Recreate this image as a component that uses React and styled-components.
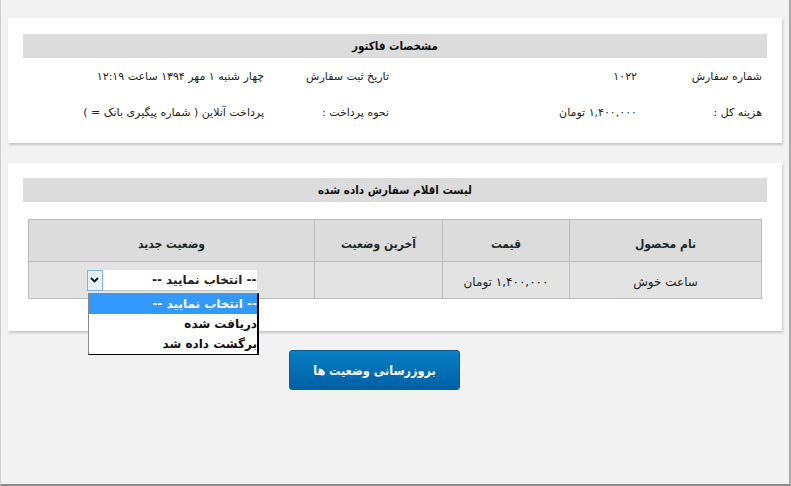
import React from 'react';
import styled, { createGlobalStyle, css } from 'styled-components';

// Invoice details page (order info + ordered items with status select)

const GlobalStyle = createGlobalStyle`
  html, body {
    margin: 0;
    padding: 0;
    background: #f2f2f2;
  }
  body {
    font-family: "DejaVu Sans", "Noto Sans", sans-serif;
    font-size: 12px;
    color: #222;
  }
`

const Frame = styled.div`
  box-sizing: border-box;
  width: 791px;
  height: 486px;
  direction: rtl;
  border-left: 1px solid #cfcfcf;
  border-right: 2px solid #a8a8a8;
  border-bottom: 2px solid #8a8a8a;
  padding: 18px 7px 0 7px;
`

const Card = styled.div`
  background: #fff;
  box-shadow: 1px 2px 2px rgba(0, 0, 0, 0.18);
  padding: 16px 15px 13px 15px;
  margin-bottom: 20px;

  ${props => props.items && css`
    padding: 15px 15px 32px 15px;
    margin-bottom: 19px;
  `}
`

const TitleBar = styled.div`
  height: 24px;
  line-height: 25px;
  background: #dcdcdc;
  text-align: center;
  font-family: "DejaVu Sans Condensed", "DejaVu Sans", sans-serif;
  font-weight: bold;
  font-size: 11.5px;
  color: #111;
`

const InfoTable = styled.div`
  display: grid;
  grid-template-columns: 125px 248px 125px 1fr;
  grid-auto-rows: 36px;
  font-size: 11px;
`

const InfoCell = styled.div`
  display: flex;
  align-items: center;
  padding-right: 5px;
  white-space: nowrap;
`

const ItemsTable = styled.div`
  display: grid;
  grid-template-columns: 192px 127px 128px 1fr;
  grid-template-rows: 42px 37px;
  margin: 17px 5px 0 5px;
  border-top: 1px solid #bcbcbc;
  border-right: 1px solid #bcbcbc;
`

const Cell = styled.div`
  position: relative;
  display: flex;
  align-items: center;
  justify-content: center;
  border-left: 1px solid #bcbcbc;
  border-bottom: 1px solid #bcbcbc;
  background: #e3e3e3;
  padding-top: 3px;

  ${props => props.head && css`
    background: #dcdcdc;
    font-family: "DejaVu Sans Condensed", "DejaVu Sans", sans-serif;
    font-weight: bold;
    padding-top: 6px;
    color: #1c2a2a;
  `}
`

const Select = styled.div`
  box-sizing: border-box;
  width: 170px;
  height: 21px;
  margin-top: -2px;
  display: flex;
  align-items: center;
  background: #fff;
  border-bottom: 1px solid #c8c8c8;
  font-weight: bold;
`

const SelectText = styled.div`
  flex: 1;
  text-align: right;
`

const ArrowBox = styled.div`
  box-sizing: border-box;
  width: 16px;
  height: 21px;
  display: flex;
  align-items: center;
  justify-content: center;
  background: #e5f1fb;
  border: 1px solid #7eb4ea;
`

const OptionList = styled.div`
  position: absolute;
  top: 31px;
  left: 59px;
  box-sizing: border-box;
  width: 171px;
  background: #fff;
  border: 1px solid #888;
  border-right: 2px solid #000;
  border-bottom: 1px solid #000;
  z-index: 2;
`

const Option = styled.div`
  height: 20px;
  line-height: 20px;
  text-align: right;
  font-weight: bold;
  white-space: nowrap;
  overflow: hidden;
  color: #111;

  ${props => props.selected && css`
    background: #3399ff;
    color: #fff;
  `}
`

const ButtonRow = styled.div`
  display: flex;
  padding-right: 322px;
`

const UpdateButton = styled.button`
  width: 171px;
  height: 40px;
  border: 1px solid #0b5a92;
  border-radius: 3px;
  background: linear-gradient(#0a80c5, #005fa6);
  color: #fff;
  font-family: "DejaVu Sans Condensed", "DejaVu Sans", sans-serif;
  font-size: 12.5px;
  font-weight: bold;
  direction: rtl;
  cursor: pointer;
`

const info = [
  ['شماره سفارش', '۱۰۲۲', 'تاریخ ثبت سفارش', 'چهار شنبه ۱ مهر ۱۳۹۴ ساعت ۱۲:۱۹'],
  ['هزینه کل :', '۱,۴۰۰,۰۰۰ تومان', 'نحوه پرداخت :', 'پرداخت آنلاین ( شماره پیگیری بانک = )'],
]

const options = ['-- انتخاب نمایید --', 'دریافت شده', 'برگشت داده شد']

function StatusSelect() {
  return (
    <>
      <Select>
        <SelectText>{options[0]}</SelectText>
        <ArrowBox>
          <svg width="9" height="6" viewBox="0 0 9 6">
            <path d="M1 1 L4.5 4.5 L8 1" stroke="#111" strokeWidth="1.8" fill="none" />
          </svg>
        </ArrowBox>
      </Select>
      <OptionList>
        {options.map((o, i) => <Option key={o} selected={i === 0}>{o}</Option>)}
      </OptionList>
    </>
  )
}

export default function App() {
  return (
    <Frame>
      <GlobalStyle />
      <Card>
        <TitleBar>مشخصات فاکتور</TitleBar>
        <InfoTable>
          {info.flat().map((t, i) => <InfoCell key={i}>{t}</InfoCell>)}
        </InfoTable>
      </Card>
      <Card items>
        <TitleBar>لیست اقلام سفارش داده شده</TitleBar>
        <ItemsTable>
          <Cell head>نام محصول</Cell>
          <Cell head>قیمت</Cell>
          <Cell head>آخرین وضعیت</Cell>
          <Cell head>وضعیت جدید</Cell>
          <Cell>ساعت خوش</Cell>
          <Cell>۱,۴۰۰,۰۰۰ تومان</Cell>
          <Cell></Cell>
          <Cell><StatusSelect /></Cell>
        </ItemsTable>
      </Card>
      <ButtonRow>
        <UpdateButton>بروزرسانی وضعیت ها</UpdateButton>
      </ButtonRow>
    </Frame>
  )
}
